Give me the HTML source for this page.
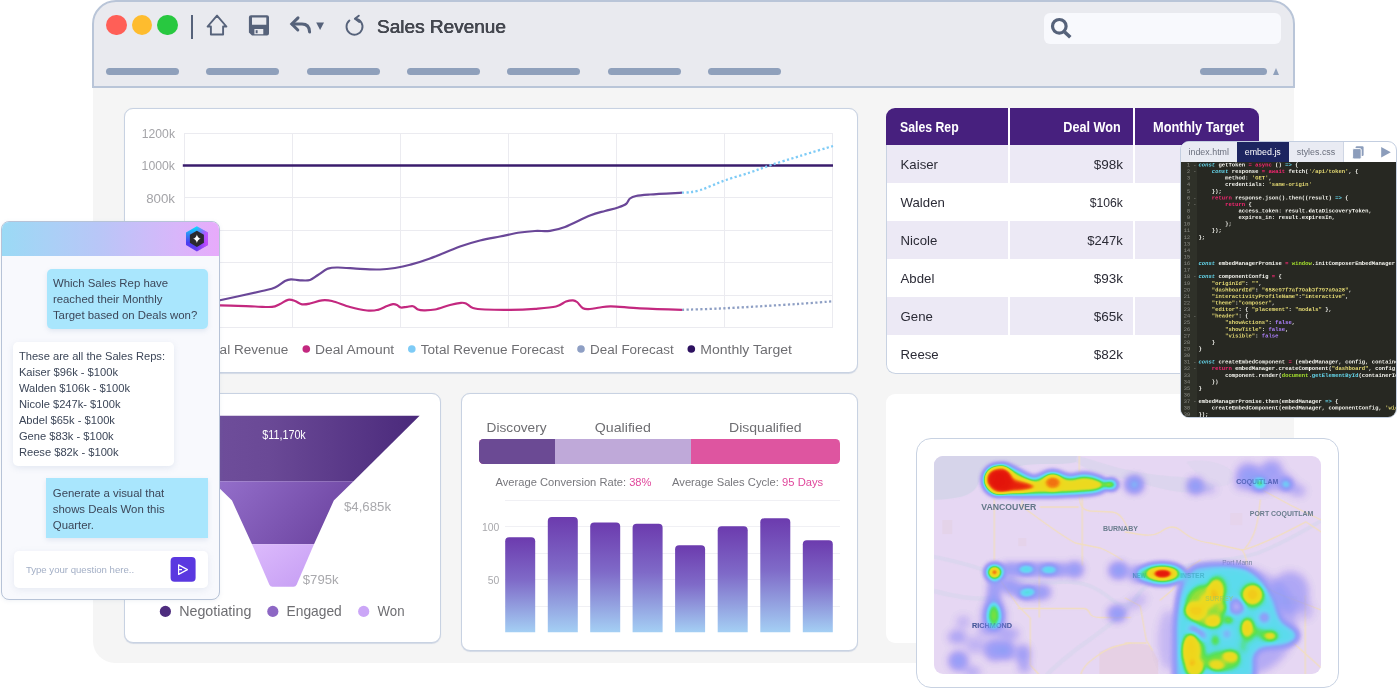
<!DOCTYPE html>
<html lang="en">
<head>
<meta charset="utf-8">
<title>Sales Revenue</title>
<style>
*{box-sizing:border-box;margin:0;padding:0}
html,body{width:1398px;height:688px;overflow:hidden;background:#fff;font-family:"Liberation Sans",sans-serif}
#stage{position:relative;width:1398px;height:688px;overflow:hidden;will-change:transform}
.abs{position:absolute}
/* window */
#content{left:93px;top:87px;width:1201px;height:576px;background:#f5f5f5;border-radius:0 0 0 22px}
#header{left:92px;top:0;width:1203px;height:88px;background:#e9eaef;border:2px solid #b9c5d8;border-radius:24px 24px 0 0}
.dot{width:20.4px;height:20.4px;border-radius:50%;top:15px}
.pill{height:7px;border-radius:4px;background:#8fa0bb;top:68px;width:73px}
#title{left:377px;top:15px;font-size:19px;line-height:24px;color:#44474f;font-weight:400;text-shadow:.35px 0 0 #44474f,-.2px 0 0 #44474f;white-space:nowrap}
#search{left:1044px;top:13px;width:236.5px;height:30.5px;background:#f8f9fd;border-radius:6px}
.card{background:#fff;border:1.3px solid #c8d2e2;border-radius:9px;box-shadow:0 .8px .8px rgba(170,185,210,.45)}
.t{position:absolute;white-space:nowrap;line-height:1}
</style>
</head>
<body>
<div id="stage">
<div id="content" class="abs"></div>
<div id="header" class="abs"></div>
<div class="abs dot" style="left:106.4px;background:#ff5f57"></div>
<div class="abs dot" style="left:131.8px;background:#febc2e"></div>
<div class="abs dot" style="left:157.4px;background:#28c840"></div>
<div class="abs" style="left:191px;top:15px;width:2px;height:24px;background:#56627a"></div>
<div id="search" class="abs"></div>
<svg class="abs" style="left:0;top:0" width="1398" height="60" viewBox="0 0 1398 60">
<g fill="none" stroke="#56627a" stroke-width="1.9" stroke-linejoin="round" stroke-linecap="round">
<path d="M217 15.6 L207.6 26.5 L210.9 26.5 L210.9 34.5 L223.1 34.5 L223.1 26.5 L226.4 26.5 Z"/>
<path d="M349.4 20.5 A8 8 0 1 0 355.4 18.7"/>
<path d="M358.8 15.7 L354.9 18.8 L359.3 22"/>
</g>
<path d="M251 15.3 H267 Q269 15.3 269 17.3 V33.4 Q269 35.4 267 35.4 H252 L248.9 32.6 V17.3 Q248.9 15.3 251 15.3 Z M252 17.6 V24.8 H266.3 V17.6 Z M254.4 29 V34.2 H263.3 V29 Z" fill="#56627a" fill-rule="evenodd"/>
<rect x="255.7" y="30.2" width="1.9" height="3" fill="#56627a"/>
<path d="M298 17.9 L291.8 24 L297.8 30" fill="none" stroke="#56627a" stroke-width="3" stroke-linejoin="miter" stroke-linecap="round"/>
<path d="M292.3 24 H302 Q309.3 24 309.6 32" fill="none" stroke="#56627a" stroke-width="3" stroke-linecap="round"/>
<path d="M316.2 22.5 H324 L320.1 30 Z" fill="#56627a"/>
<circle cx="1059.3" cy="26.3" r="6.8" fill="none" stroke="#56627a" stroke-width="3.2"/>
<path d="M1064.6 32 L1070.3 37.3" stroke="#56627a" stroke-width="3.6" fill="none"/>
</svg>
<div id="title" class="abs">Sales Revenue</div>
<div class="abs pill" style="left:106px"></div>
<div class="abs pill" style="left:206.3px"></div>
<div class="abs pill" style="left:306.6px"></div>
<div class="abs pill" style="left:406.9px"></div>
<div class="abs pill" style="left:507.2px"></div>
<div class="abs pill" style="left:607.5px"></div>
<div class="abs pill" style="left:707.8px"></div>
<div class="abs pill" style="left:1200px;width:67px"></div>
<div class="abs" style="left:1272.5px;top:68px;width:0;height:0;border-left:3.6px solid transparent;border-right:3.6px solid transparent;border-bottom:7px solid #8fa0bb"></div>

<div class="abs card" style="left:124px;top:107.5px;width:733.5px;height:265.5px"></div>
<svg class="abs" style="left:0;top:0" width="1398" height="688" viewBox="0 0 1398 688" font-family="Liberation Sans, sans-serif">
<g stroke="#ebebf0" stroke-width="1" fill="none"><path d="M184 133.5 H833"/><path d="M184 165.5 H833"/><path d="M184 197.5 H833"/><path d="M184 230.5 H833"/><path d="M184 262.5 H833"/><path d="M184 295.5 H833"/><path d="M184 327.5 H833"/><path d="M184.5 133 V327.5"/><path d="M292.5 133 V327.5"/><path d="M400.5 133 V327.5"/><path d="M508.5 133 V327.5"/><path d="M616.5 133 V327.5"/><path d="M724.5 133 V327.5"/><path d="M832.5 133 V327.5"/></g>
<g font-size="13.3" fill="#a4a4a8"><text x="175" y="137.9" text-anchor="end" textLength="33.2" lengthAdjust="spacingAndGlyphs">1200k</text><text x="175" y="170.3" text-anchor="end" textLength="33.4" lengthAdjust="spacingAndGlyphs">1000k</text><text x="175" y="202.7" text-anchor="end">800k</text></g>
<path d="M182.8 165.5 H833" stroke="#3a1c6c" stroke-width="2.6" fill="none"/>
<path d="M150 318 C155.7 316.4 172.3 311.4 184 308.5 C195.7 305.6 207.0 303.2 220 300.3 C233.0 297.4 252.8 293.1 262 291 C271.2 288.9 271.2 289.2 275 287.5 C278.8 285.8 282.3 282.4 285 281 C287.7 279.6 288.5 279.4 291 279.3 C293.5 279.2 296.8 280.2 300 280.3 C303.2 280.4 307.0 280.9 310 280 C313.0 279.1 315.0 276.9 318 275 C321.0 273.1 324.7 269.9 328 268.6 C331.3 267.4 332.7 267.5 338 267.5 C343.3 267.5 353.0 268.5 360 268.8 C367.0 269.1 374.2 269.6 380 269.5 C385.8 269.4 390.0 268.8 395 268 C400.0 267.2 404.2 266.4 410 264.8 C415.8 263.2 421.7 261.6 430 258.5 C438.3 255.4 451.7 249.5 460 246.5 C468.3 243.5 473.3 242.2 480 240.5 C486.7 238.8 493.3 237.8 500 236.5 C506.7 235.2 514.2 233.4 520 232.5 C525.8 231.6 530.0 231.3 535 231 C540.0 230.7 545.0 231.5 550 230.8 C555.0 230.1 558.3 229.6 565 227 C571.7 224.4 583.3 218.2 590 215.5 C596.7 212.8 600.3 212.3 605 211 C609.7 209.7 614.5 208.7 618 207.5 C621.5 206.3 624.0 205.5 626 204 C628.0 202.5 628.3 199.8 630 198.5 C631.7 197.2 632.7 196.7 636 196 C639.3 195.3 642.3 195.1 650 194.5 C657.7 193.9 676.7 193.0 682 192.7" stroke="#6a4798" stroke-width="2.2" fill="none"/>
<path d="M150 305 C155.7 305.0 172.3 305.1 184 305.2 C195.7 305.2 208.2 305.1 220 305.3 C231.8 305.5 246.3 306.2 255 306.5 C263.7 306.8 267.8 307.3 272 306.9 C276.2 306.5 277.3 305.2 280 304 C282.7 302.8 285.5 300.3 288 299.8 C290.5 299.3 292.7 300.2 295 301 C297.3 301.8 299.5 303.9 302 304.3 C304.5 304.7 306.7 304.2 310 303.5 C313.3 302.8 318.3 300.7 322 300.3 C325.7 299.9 327.3 299.9 332 301 C336.7 302.1 344.2 305.4 350 307 C355.8 308.6 362.3 310.0 367 310.5 C371.7 311.0 374.7 310.6 378 309.8 C381.3 309.1 384.5 306.9 387 306 C389.5 305.1 391.3 304.4 393 304.2 C394.7 304.0 395.7 304.4 397 305 C398.3 305.6 399.3 307.2 401 307.5 C402.7 307.8 405.0 307.0 407 306.8 C409.0 306.6 411.2 305.8 413 306.2 C414.8 306.6 416.2 308.8 418 309.5 C419.8 310.2 421.2 310.3 424 310.3 C426.8 310.3 430.7 310.4 435 309.5 C439.3 308.6 445.7 306.1 450 305 C454.3 303.9 458.3 303.1 461 302.8 C463.7 302.6 464.0 302.6 466 303.5 C468.0 304.4 469.8 307.0 473 308 C476.2 309.0 478.8 309.2 485 309.5 C491.2 309.8 501.7 310.0 510 309.9 C518.3 309.8 527.3 309.4 535 308.8 C542.7 308.2 550.8 307.7 556 306.5 C561.2 305.3 563.2 302.5 566 301.5 C568.8 300.5 571.2 300.2 573 300.3 C574.8 300.4 575.3 300.7 577 302 C578.7 303.3 580.8 307.1 583 308.3 C585.2 309.5 587.2 309.1 590 309 C592.8 308.9 596.5 307.9 600 307.5 C603.5 307.1 604.3 306.2 611 306.3 C617.7 306.4 628.2 307.7 640 308.3 C651.8 308.9 675.0 309.6 682 309.8" stroke="#c3287f" stroke-width="2.2" fill="none"/>
<path d="M682 192.7 C683.3 192.6 687.0 192.6 690 192.2 C693.0 191.8 696.3 191.3 700 190.2 C703.7 189.1 707.7 187.2 712 185.5 C716.3 183.8 719.7 182.2 726 180 C732.3 177.8 742.5 175.0 750 172.5 C757.5 170.0 762.7 167.8 771 165 C779.3 162.2 789.7 159.2 800 156 C810.3 152.8 827.5 147.7 833 146" stroke="#7ecbf6" stroke-width="2.3" fill="none" stroke-dasharray="2.2 2.4"/>
<path d="M682 309.8 C688.3 309.6 707.0 309.1 720 308.5 C733.0 307.9 746.7 307.1 760 306.3 C773.3 305.5 787.8 304.6 800 303.8 C812.2 303.0 827.5 301.7 833 301.3" stroke="#8e9fc4" stroke-width="2.3" fill="none" stroke-dasharray="2.2 2.4"/>
<g font-size="13.7" fill="#6e6e72">
<circle cx="306.3" cy="349" r="3.8" fill="#c3287f"/><text x="315" y="353.7" textLength="79.2" lengthAdjust="spacingAndGlyphs">Deal Amount</text>
<circle cx="411.8" cy="349" r="3.8" fill="#7ecbf6"/><text x="420.8" y="353.7" textLength="143.2" lengthAdjust="spacingAndGlyphs">Total Revenue Forecast</text>
<circle cx="581" cy="349" r="3.8" fill="#8e9fc4"/><text x="590" y="353.7" textLength="83.7" lengthAdjust="spacingAndGlyphs">Deal Forecast</text>
<circle cx="691.3" cy="349" r="3.8" fill="#2d1160"/><text x="700.2" y="353.7" textLength="91.8" lengthAdjust="spacingAndGlyphs">Monthly Target</text>
<circle cx="192.5" cy="349" r="3.8" fill="#6a4798"/><text x="201.5" y="353.7" textLength="86.8" lengthAdjust="spacingAndGlyphs">Total Revenue</text>
</g>
</svg>
<div class="abs card" style="left:124px;top:393px;width:317px;height:249.5px"></div>
<svg class="abs" style="left:0;top:0" width="1398" height="688" viewBox="0 0 1398 688" font-family="Liberation Sans, sans-serif">
<defs>
<linearGradient id="f1" x1="0" y1="0" x2="1" y2="0"><stop offset="0" stop-color="#7453a0"/><stop offset=".45" stop-color="#6a4996"/><stop offset="1" stop-color="#4a297b"/></linearGradient>
<linearGradient id="f2" x1="0" y1="0" x2="1" y2="0.4"><stop offset="0" stop-color="#9570cc"/><stop offset="1" stop-color="#6f47a3"/></linearGradient>
<linearGradient id="f3" x1="0" y1="0" x2="1" y2="1"><stop offset="0" stop-color="#dcbafc"/><stop offset="1" stop-color="#c59df3"/></linearGradient>
</defs>
<path d="M146.2 415.8 H419.6 L353.5 481.2 H212.3 Z" fill="url(#f1)"/>
<path d="M212.3 481.2 H353.5 L333.8 500.6 L314 544.3 H252 L232 500.6 Z" fill="url(#f2)"/>
<path d="M252 544.3 H314 L296.6 584.8 Q295.7 586.8 293.5 586.8 H272.5 Q270.3 586.8 269.4 584.8 Z" fill="url(#f3)"/>
<text x="284" y="438.8" font-size="12.6" fill="#fff" text-anchor="middle" textLength="43.5" lengthAdjust="spacingAndGlyphs">$11,170k</text>
<g font-size="13.2" fill="#a9a9ad">
<text x="344" y="510.8" textLength="47" lengthAdjust="spacingAndGlyphs">$4,685k</text>
<text x="302.8" y="583.8" textLength="35.8" lengthAdjust="spacingAndGlyphs">$795k</text>
</g>
<g font-size="14.2" fill="#6e6e72">
<circle cx="165.4" cy="611.4" r="5.6" fill="#4d2c7e"/><text x="179.2" y="616.3" textLength="72.2" lengthAdjust="spacingAndGlyphs">Negotiating</text>
<circle cx="272.8" cy="611.4" r="5.6" fill="#8d67c4"/><text x="286.6" y="616.3" textLength="55.2" lengthAdjust="spacingAndGlyphs">Engaged</text>
<circle cx="363.7" cy="611.4" r="5.6" fill="#cba6f7"/><text x="377.5" y="616.3" textLength="27" lengthAdjust="spacingAndGlyphs">Won</text>
</g>
</svg>
<div class="abs card" style="left:461px;top:393px;width:397px;height:258px"></div>
<div class="abs" style="left:478.7px;top:438.6px;width:361.5px;height:25px;border-radius:4.5px;overflow:hidden;background:#de55a0"><div class="abs" style="left:0;top:0;width:76.8px;height:25px;background:#6b4a94"></div><div class="abs" style="left:76.8px;top:0;width:135.8px;height:25px;background:#bfa9d9"></div></div>
<svg class="abs" style="left:0;top:0" width="1398" height="688" viewBox="0 0 1398 688" font-family="Liberation Sans, sans-serif">
<defs><linearGradient id="bg0" gradientUnits="userSpaceOnUse" x1="0" y1="537.3" x2="0" y2="632.2"><stop offset="0" stop-color="#6c3bae"/><stop offset=".45" stop-color="#7f6ac8"/><stop offset="1" stop-color="#a4cff4"/></linearGradient><linearGradient id="bg1" gradientUnits="userSpaceOnUse" x1="0" y1="517" x2="0" y2="632.2"><stop offset="0" stop-color="#6c3bae"/><stop offset=".45" stop-color="#7f6ac8"/><stop offset="1" stop-color="#a4cff4"/></linearGradient><linearGradient id="bg2" gradientUnits="userSpaceOnUse" x1="0" y1="522.5" x2="0" y2="632.2"><stop offset="0" stop-color="#6c3bae"/><stop offset=".45" stop-color="#7f6ac8"/><stop offset="1" stop-color="#a4cff4"/></linearGradient><linearGradient id="bg3" gradientUnits="userSpaceOnUse" x1="0" y1="523.8" x2="0" y2="632.2"><stop offset="0" stop-color="#6c3bae"/><stop offset=".45" stop-color="#7f6ac8"/><stop offset="1" stop-color="#a4cff4"/></linearGradient><linearGradient id="bg4" gradientUnits="userSpaceOnUse" x1="0" y1="545.3" x2="0" y2="632.2"><stop offset="0" stop-color="#6c3bae"/><stop offset=".45" stop-color="#7f6ac8"/><stop offset="1" stop-color="#a4cff4"/></linearGradient><linearGradient id="bg5" gradientUnits="userSpaceOnUse" x1="0" y1="526.3" x2="0" y2="632.2"><stop offset="0" stop-color="#6c3bae"/><stop offset=".45" stop-color="#7f6ac8"/><stop offset="1" stop-color="#a4cff4"/></linearGradient><linearGradient id="bg6" gradientUnits="userSpaceOnUse" x1="0" y1="518.3" x2="0" y2="632.2"><stop offset="0" stop-color="#6c3bae"/><stop offset=".45" stop-color="#7f6ac8"/><stop offset="1" stop-color="#a4cff4"/></linearGradient><linearGradient id="bg7" gradientUnits="userSpaceOnUse" x1="0" y1="540.2" x2="0" y2="632.2"><stop offset="0" stop-color="#6c3bae"/><stop offset=".45" stop-color="#7f6ac8"/><stop offset="1" stop-color="#a4cff4"/></linearGradient></defs>
<g font-size="13.6" fill="#6e6e72" text-anchor="middle">
<text x="516.6" y="431.9" textLength="60" lengthAdjust="spacingAndGlyphs">Discovery</text>
<text x="622.8" y="431.9" textLength="56" lengthAdjust="spacingAndGlyphs">Qualified</text>
<text x="765.3" y="431.9" textLength="72.5" lengthAdjust="spacingAndGlyphs">Disqualified</text>
</g>
<g font-size="11.1" fill="#77777c">
<text x="495.5" y="485.9" textLength="156" lengthAdjust="spacingAndGlyphs">Average Conversion Rate: <tspan fill="#e0489c">38%</tspan></text>
<text x="672" y="485.9" textLength="151.2" lengthAdjust="spacingAndGlyphs">Average Sales Cycle: <tspan fill="#e0489c">95 Days</tspan></text>
</g>
<g stroke="#f0f0f4" stroke-width="1" fill="none"><path d="M505 500.5 H840"/><path d="M505 526.5 H840"/><path d="M505 553.5 H840"/><path d="M505 579.5 H840"/><path d="M505 606.5 H840"/></g>
<g font-size="10.4" fill="#a9a9ad" text-anchor="end"><text x="499.3" y="530.6">100</text><text x="499.3" y="584.2">50</text></g>
<path d="M505.2 632.2 V541.3 Q505.2 537.3 509.2 537.3 H531.2 Q535.2 537.3 535.2 541.3 V632.2 Z" fill="url(#bg0)"/><path d="M547.8 632.2 V521 Q547.8 517 551.8 517 H573.8 Q577.8 517 577.8 521 V632.2 Z" fill="url(#bg1)"/><path d="M590.2 632.2 V526.5 Q590.2 522.5 594.2 522.5 H616.2 Q620.2 522.5 620.2 526.5 V632.2 Z" fill="url(#bg2)"/><path d="M632.6 632.2 V527.8 Q632.6 523.8 636.6 523.8 H658.6 Q662.6 523.8 662.6 527.8 V632.2 Z" fill="url(#bg3)"/><path d="M675.1 632.2 V549.3 Q675.1 545.3 679.1 545.3 H701.1 Q705.1 545.3 705.1 549.3 V632.2 Z" fill="url(#bg4)"/><path d="M717.7 632.2 V530.3 Q717.7 526.3 721.7 526.3 H743.7 Q747.7 526.3 747.7 530.3 V632.2 Z" fill="url(#bg5)"/><path d="M760.3 632.2 V522.3 Q760.3 518.3 764.3 518.3 H786.3 Q790.3 518.3 790.3 522.3 V632.2 Z" fill="url(#bg6)"/><path d="M802.8 632.2 V544.2 Q802.8 540.2 806.8 540.2 H828.8 Q832.8 540.2 832.8 544.2 V632.2 Z" fill="url(#bg7)"/>
</svg>
<div class="abs" style="left:886.2px;top:108.1px;width:372.6px;height:265px;border-radius:9px;overflow:hidden;background:#fff">
<div class="abs" style="left:0;top:0;width:373px;height:37.1px;background:#47207e"></div>
<div class="abs" style="left:0;top:37.10px;width:373px;height:38px;background:#ece9f5"></div><div class="t" style="left:14.4px;top:50.30px;font-size:13.2px;color:#2b2b36">Kaiser</div><div class="t" style="right:135.7px;top:50.30px;font-size:13.5px;color:#2b2b36;transform:scaleX(1);transform-origin:right">$98k</div><div class="abs" style="left:0;top:75.05px;width:373px;height:38px;background:#fff"></div><div class="t" style="left:14.4px;top:88.25px;font-size:13.2px;color:#2b2b36">Walden</div><div class="t" style="right:135.7px;top:88.25px;font-size:13.5px;color:#2b2b36;transform:scaleX(0.9);transform-origin:right">$106k</div><div class="abs" style="left:0;top:113.00px;width:373px;height:38px;background:#ece9f5"></div><div class="t" style="left:14.4px;top:126.20px;font-size:13.2px;color:#2b2b36">Nicole</div><div class="t" style="right:135.7px;top:126.20px;font-size:13.5px;color:#2b2b36;transform:scaleX(0.965);transform-origin:right">$247k</div><div class="abs" style="left:0;top:150.95px;width:373px;height:38px;background:#fff"></div><div class="t" style="left:14.4px;top:164.15px;font-size:13.2px;color:#2b2b36">Abdel</div><div class="t" style="right:135.7px;top:164.15px;font-size:13.5px;color:#2b2b36;transform:scaleX(1);transform-origin:right">$93k</div><div class="abs" style="left:0;top:188.90px;width:373px;height:38px;background:#ece9f5"></div><div class="t" style="left:14.4px;top:202.10px;font-size:13.2px;color:#2b2b36">Gene</div><div class="t" style="right:135.7px;top:202.10px;font-size:13.5px;color:#2b2b36;transform:scaleX(1);transform-origin:right">$65k</div><div class="abs" style="left:0;top:226.85px;width:373px;height:38px;background:#fff"></div><div class="t" style="left:14.4px;top:240.05px;font-size:13.2px;color:#2b2b36">Reese</div><div class="t" style="right:135.7px;top:240.05px;font-size:13.5px;color:#2b2b36;transform:scaleX(1);transform-origin:right">$82k</div>
<div class="abs" style="left:122px;top:0;width:2px;height:266px;background:#fff"></div>
<div class="abs" style="left:246.8px;top:0;width:2px;height:266px;background:#fff"></div>
<div class="t" style="left:13.4px;top:13px;font-size:13.8px;font-weight:700;color:#fff;transform:scaleX(.89);transform-origin:left">Sales Rep</div>
<div class="t" style="right:138.3px;top:13px;font-size:13.8px;font-weight:700;color:#fff;transform:scaleX(.915);transform-origin:right">Deal Won</div>
<div class="t" style="left:267.2px;top:13px;font-size:13.8px;font-weight:700;color:#fff;transform:scaleX(.93);transform-origin:left">Monthly Target</div>
</div>
<div class="abs" style="left:885.7px;top:145px;width:373.6px;height:228.6px;border:1.2px solid #c8d2e2;border-top:none;border-radius:0 0 9.5px 9.5px"></div>
<div class="abs" style="left:886px;top:393.5px;width:374px;height:249px;background:#fff;border-radius:9px"></div>
<!--MAPSTART--><div class="abs" style="left:915.8px;top:438px;width:422.8px;height:249.5px;background:#fff;border:1.3px solid #c8d2e2;border-radius:15px"></div>
<svg class="abs" style="left:933.7px;top:456px;border-radius:9px" width="387.3" height="217.8" viewBox="933.7 456 387.3 217.8" font-family="Liberation Sans, sans-serif">
<defs>
<filter id="heat" filterUnits="userSpaceOnUse" x="920" y="440" width="420" height="250" color-interpolation-filters="sRGB">
<feColorMatrix in="SourceGraphic" type="matrix" values="0 0 0 1 0 0 0 0 1 0 0 0 0 1 0 0 0 0 0 1" result="gray"/>
<feComponentTransfer in="gray" result="col">
<feFuncR type="table" tableValues="0.66 0.62 0.58 0.55 0.53 0.51 0.49 0.46 0.42 0.38 0.36 0.34 0.33 0.34 0.45 0.68 0.86 0.92 0.93 0.94 0.95 0.95 0.95 0.93 0.91 0.89"/>
<feFuncG type="table" tableValues="0.58 0.56 0.55 0.55 0.56 0.58 0.62 0.70 0.78 0.84 0.86 0.87 0.88 0.88 0.88 0.87 0.86 0.86 0.85 0.84 0.78 0.64 0.46 0.28 0.13 0.07"/>
<feFuncB type="table" tableValues="0.94 0.95 0.96 0.97 0.97 0.97 0.97 0.97 0.96 0.95 0.93 0.80 0.55 0.35 0.26 0.20 0.15 0.13 0.12 0.11 0.10 0.08 0.07 0.06 0.05 0.04"/>
</feComponentTransfer>
<feComponentTransfer in="SourceGraphic" result="mask">
<feFuncA type="table" tableValues="0.00 0.32 0.56 0.70 0.78 0.84 0.88 0.92 0.95 0.97 1.00 1.00 1.00 1.00 1.00 1.00 1.00 1.00 1.00 1.00 1.00 1.00 1.00 1.00 1.00 1.00"/>
</feComponentTransfer>
<feComposite in="col" in2="mask" operator="in"/>
</filter>
<filter id="bhs" filterUnits="userSpaceOnUse" x="900" y="420" width="460" height="290"><feGaussianBlur stdDeviation="2.6"/></filter>
<filter id="bhw" filterUnits="userSpaceOnUse" x="900" y="420" width="460" height="290"><feGaussianBlur stdDeviation="4.2"/></filter>
<filter id="bsp" filterUnits="userSpaceOnUse" x="900" y="420" width="460" height="290"><feGaussianBlur stdDeviation="3"/></filter>
<filter id="brv" filterUnits="userSpaceOnUse" x="900" y="420" width="460" height="290"><feGaussianBlur stdDeviation="2.3"/></filter>
<filter id="bm" filterUnits="userSpaceOnUse" x="900" y="420" width="460" height="290"><feGaussianBlur stdDeviation="2"/></filter>
<filter id="bms" filterUnits="userSpaceOnUse" x="900" y="420" width="460" height="290"><feGaussianBlur stdDeviation="2.8"/></filter>
<filter id="br" filterUnits="userSpaceOnUse" x="900" y="420" width="460" height="290"><feGaussianBlur stdDeviation="1.5"/></filter>
<filter id="soft" filterUnits="userSpaceOnUse" x="900" y="420" width="460" height="290"><feGaussianBlur stdDeviation=".7"/></filter>
</defs>
<rect x="930" y="450" width="400" height="230" fill="#e6d7f3"/>
<g filter="url(#soft)">
<path d="M930 450 H1078 L1076 462 C1060 466 1040 462 1020 466 C1000 470 985 468 980 478 C978 488 972 494 960 497 C950 499 940 500 930 500 Z" fill="#d6d4ea"/>
<path d="M1078 456 C1100 462 1120 470 1150 474 C1180 478 1200 476 1212 484 C1220 490 1200 494 1180 492 C1160 490 1140 482 1120 478 C1100 474 1085 470 1076 462 Z" fill="#dad5ec" opacity=".8"/>
<path d="M1186 462 C1200 458 1225 462 1232 472 C1236 482 1226 488 1214 486 C1204 480 1194 472 1186 462 Z" fill="#ddd6ee" opacity=".7"/>
<path d="M930 556 C950 560 975 566 994 574 C1010 580 1040 584 1060 582 C1085 580 1100 590 1112 600 C1124 610 1132 604 1140 592 C1150 580 1165 572 1185 566 C1210 560 1240 560 1260 552 C1285 542 1305 530 1322 520" fill="none" stroke="#d9d6ee" stroke-width="4" opacity=".8"/>
<path d="M930 590 C950 596 975 600 990 598 M1140 592 C1125 615 1100 632 1075 650 C1060 662 1050 670 1046 676" fill="none" stroke="#d9d6ee" stroke-width="4.5" opacity=".75"/>
<path d="M1099 676 L1099 652 L1112 646 L1130 643 L1150 645 L1158 660 L1158 676 Z" fill="#e6d0e4"/>
<rect x="942" y="520" width="10" height="14" fill="#e4d2e6" opacity=".8"/><rect x="1018" y="538" width="8" height="8" fill="#e4d2e6" opacity=".7"/>
<rect x="1283" y="596" width="14" height="8" fill="#dfd6e6" opacity=".8"/><rect x="1230" y="513" width="12" height="12" fill="#e6d3e8" opacity=".7"/>
<g fill="none" stroke="#f1ddc0" stroke-width="1.3" stroke-linecap="round" stroke-linejoin="round">
<path d="M994 497 V560"/><path d="M1022 497 V505"/><path d="M1079 456 V497 C1080 506 1082 510 1090 511 L1112 512 C1120 513 1124 520 1128 530"/>
<path d="M1040 507 H1078"/><path d="M1020 505 C1040 520 1060 535 1075 543 L1100 548 C1110 552 1116 556 1122 560"/>
<path d="M1082 497 V565"/>
<path d="M1125 532 C1140 534 1150 538 1160 532 C1168 526 1174 525 1180 530 C1190 538 1196 541 1210 543 L1242 550 C1262 545 1290 530 1305.500 521.8 L1321 532"/>
<path d="M1242 550 C1246 556 1247 562 1246 568"/><path d="M1260 500 C1258 520 1256 535 1245 548"/><path d="M1262 490 L1290 505 L1321 520"/>
<path d="M1000 580 L1018 606 L1030 618 V665 L1040 676"/><path d="M1018 608.500 H1084 C1088 609 1089 612 1090 614 C1092 617 1096 617.500 1100 617.500 H1130"/>
<path d="M1039 568 V617"/><path d="M1080 676 C1082 668 1088 662 1094 658 C1104 650 1112 646 1130 643"/>
<path d="M1125 598 L1140 606 L1146 640 L1152 650"/><path d="M1125 643 H1146"/><path d="M1160 600 L1172 590 L1185 570 L1200 560"/>
<path d="M1248 566 C1256 580 1266 590 1284 596 L1321 610"/><path d="M1305 596 V676"/><path d="M1290 640 L1321 668"/>
</g>
</g><g><text x="981" y="510.3" font-size="8.3" font-weight="700" fill="#5c7282" fill-opacity="0.95" textLength="55" lengthAdjust="spacingAndGlyphs">VANCOUVER</text><text x="1102.6" y="530.6" font-size="6.6" font-weight="700" fill="#5c7282" fill-opacity="0.9" textLength="35" lengthAdjust="spacingAndGlyphs">BURNABY</text><text x="1236" y="484.2" font-size="6.6" font-weight="700" fill="#3a4f86" fill-opacity="1" textLength="42" lengthAdjust="spacingAndGlyphs">COQUITLAM</text><text x="1249.5" y="516.4" font-size="6.6" font-weight="700" fill="#5c7282" fill-opacity="0.9" textLength="63.5" lengthAdjust="spacingAndGlyphs">PORT COQUITLAM</text><text x="1222" y="564.6" font-size="6.4" font-weight="400" fill="#5c7282" fill-opacity="0.9" textLength="30" lengthAdjust="spacingAndGlyphs">Port Mann</text><text x="971.8" y="628.2" font-size="6.8" font-weight="700" fill="#3f548a" fill-opacity="1" textLength="40" lengthAdjust="spacingAndGlyphs">RICHMOND</text><text x="1132.3" y="577.6" font-size="6.8" font-weight="700" fill="#4c6488" fill-opacity="0.95" textLength="72" lengthAdjust="spacingAndGlyphs">NEW WESTMINSTER</text></g>
</svg>
<svg class="abs" style="left:933.7px;top:456px;border-radius:9px" width="387.3" height="217.8" viewBox="933.7 456 387.3 217.8" font-family="Liberation Sans, sans-serif">
<g filter="url(#heat)" fill="#fff">
<g filter="url(#bhw)"><ellipse cx="1134" cy="484.5" rx="7.5" ry="7" fill-opacity="0.34"/><ellipse cx="1195" cy="486" rx="7" ry="7" fill-opacity="0.24"/><ellipse cx="1208" cy="489" rx="8" ry="3" fill-opacity="0.1"/><ellipse cx="1262" cy="479" rx="26" ry="12" fill-opacity="0.1"/><ellipse cx="1247" cy="472" rx="10" ry="9" fill-opacity="0.1"/><ellipse cx="1298" cy="491" rx="7" ry="5" fill-opacity="0.1"/><ellipse cx="1272" cy="467" rx="9" ry="7" fill-opacity="0.1"/><ellipse cx="1286" cy="484.5" rx="9" ry="7" fill-opacity="0.12"/><ellipse cx="1259" cy="483" rx="11" ry="8" fill-opacity="0.1"/><ellipse cx="1240" cy="484" rx="6" ry="6" fill-opacity="0.06"/><path d="M1005 569.5 L1062 570" fill="none" stroke="#fff" stroke-width="9" stroke-opacity="0.22" stroke-linecap="round" stroke-linejoin="round"/><ellipse cx="1074.5" cy="569.6" rx="7.5" ry="6.5" fill-opacity="0.22"/><ellipse cx="1118.3" cy="570.5" rx="8.5" ry="7" fill-opacity="0.24"/><ellipse cx="1138" cy="574" rx="8" ry="7" fill-opacity="0.2"/><path d="M1006 585 L1026 593 L1044 592" fill="none" stroke="#fff" stroke-width="11" stroke-opacity="0.2" stroke-linecap="round" stroke-linejoin="round"/><path d="M994.5 580 L993 603" fill="none" stroke="#fff" stroke-width="8" stroke-opacity="0.22" stroke-linecap="round" stroke-linejoin="round"/><ellipse cx="993.6" cy="616" rx="11" ry="17" fill-opacity="0.16"/><ellipse cx="1116.8" cy="613.5" rx="8" ry="7" fill-opacity="0.22"/><ellipse cx="963" cy="622" rx="7" ry="6" fill-opacity="0.07"/><ellipse cx="957" cy="637" rx="9" ry="6" fill-opacity="0.12"/><ellipse cx="958" cy="661" rx="8.5" ry="8.5" fill-opacity="0.2"/><ellipse cx="975" cy="645" rx="10" ry="8" fill-opacity="0.07"/><ellipse cx="994.5" cy="650" rx="9.5" ry="9.5" fill-opacity="0.18"/><ellipse cx="1007" cy="650.5" rx="6" ry="8.5" fill-opacity="0.2"/><ellipse cx="1022.5" cy="654" rx="6.5" ry="8.5" fill-opacity="0.16"/><ellipse cx="1024" cy="667" rx="5" ry="6" fill-opacity="0.12"/><ellipse cx="972" cy="672" rx="8" ry="5" fill-opacity="0.1"/><ellipse cx="1008" cy="634" rx="11" ry="6" fill-opacity="0.1"/><ellipse cx="985" cy="630" rx="8" ry="6" fill-opacity="0.08"/><ellipse cx="1136" cy="602" rx="12" ry="6" fill-opacity="0.06" transform="rotate(-30 1136 602)"/><ellipse cx="1236" cy="622" rx="60" ry="55" fill-opacity="0.09"/><ellipse cx="1290" cy="592" rx="18" ry="20" fill-opacity="0.1"/><ellipse cx="1168" cy="640" rx="10" ry="30" fill-opacity="0.06"/><ellipse cx="1305" cy="610" rx="8" ry="10" fill-opacity="0.06"/></g>
<g filter="url(#bsp)"><path d="M1197 566 C1212 563 1236 564 1247 569 C1258 575 1266 585 1271 597 C1276 607 1277 616 1282 622 C1288 628 1298 629 1298 636 C1297 644 1284 646 1268 647 C1258 648 1254 652 1253 660 L1254 680 L1174 680 C1175 650 1175 625 1177 603 C1179 590 1181 580 1186 574 C1189 570 1193 567 1197 566 Z M1236 599 a7.5 7.5 0 1 0 0.1 0 Z M1264 613 a4.5 4.5 0 1 0 0.1 0 Z M1192 625 l14 10 l-4.5 6 l-14 -10 Z M1226.5 630.5 a3 3.5 0 1 0 0.1 0 Z" fill-rule="evenodd" fill-opacity="0.34"/></g>
<g filter="url(#bhs)"><ellipse cx="997.5" cy="480" rx="15.5" ry="16" fill-opacity="0.42"/><g opacity=".42"><path d="M1003 468 C1012 470 1022 478.5 1032 481 C1040 482.5 1044 475.2 1052 475 C1060 475 1062 479.5 1069 479.8 C1075 480 1078 477.6 1085 477.8 C1092 478 1095 480 1099 481.2 C1103 482.5 1104 486 1099 488.3 C1094 490 1090 490.4 1085 490.6 C1075 491.3 1065 492 1052 492.2 C1040 492.3 1025 492.6 1012 492.2 C1006 492 1000 491 996 489 Z" stroke="#fff" stroke-width="8.5" stroke-linejoin="round"/></g><ellipse cx="1111" cy="484.6" rx="6.5" ry="5.5" fill-opacity="0.42"/><ellipse cx="994.2" cy="572.2" rx="9.5" ry="9" fill-opacity="0.42"/><ellipse cx="1161.5" cy="574" rx="24" ry="11" fill-opacity="0.42"/><ellipse cx="993.6" cy="616" rx="7.5" ry="12.5" fill-opacity="0.4"/><ellipse cx="1259.5" cy="483.5" rx="6.5" ry="6" fill-opacity="0.3"/><ellipse cx="1286" cy="484.5" rx="5" ry="4.5" fill-opacity="0.26"/><ellipse cx="1026" cy="569.3" rx="7.5" ry="4.2" fill-opacity="0.33"/><ellipse cx="1048.5" cy="569.8" rx="8" ry="4.2" fill-opacity="0.31"/><ellipse cx="1027" cy="592.5" rx="8" ry="4.5" fill-opacity="0.33" transform="rotate(-12 1027 592.5)"/></g>
<g filter="url(#bms)"><ellipse cx="1215.8" cy="590" rx="7.5" ry="10.5" fill-opacity="0.46"/><ellipse cx="1207" cy="601" rx="7" ry="7" fill-opacity="0.3"/><ellipse cx="1195" cy="611" rx="10.5" ry="8" fill-opacity="0.48"/><ellipse cx="1213.5" cy="622" rx="7.5" ry="5.5" fill-opacity="0.46"/><ellipse cx="1228" cy="620" rx="4.5" ry="3" fill-opacity="0.36"/><ellipse cx="1252.2" cy="594.5" rx="9" ry="9" fill-opacity="0.56"/><ellipse cx="1246.7" cy="628" rx="5" ry="8.5" fill-opacity="0.52"/><ellipse cx="1270" cy="636" rx="6.5" ry="3.8" fill-opacity="0.44"/><ellipse cx="1258" cy="632" rx="6" ry="4" fill-opacity="0.16"/><ellipse cx="1190.5" cy="651" rx="8" ry="16" fill-opacity="0.46"/><ellipse cx="1195" cy="668" rx="9" ry="8" fill-opacity="0.4"/><ellipse cx="1230.5" cy="656" rx="8" ry="5.5" fill-opacity="0.4"/><ellipse cx="1216" cy="665.5" rx="8" ry="5" fill-opacity="0.36"/><ellipse cx="1215" cy="640.5" rx="3.2" ry="5" fill-opacity="0.3"/><ellipse cx="1243" cy="646" rx="4" ry="7" fill-opacity="0.12"/><ellipse cx="1224" cy="607" rx="6" ry="5" fill-opacity="0.16"/><ellipse cx="1205" cy="606" rx="19" ry="21" fill-opacity="0.3" transform="rotate(-25 1205 606)"/><ellipse cx="1193" cy="655" rx="12" ry="24" fill-opacity="0.28"/><ellipse cx="1222" cy="661" rx="18" ry="10" fill-opacity="0.24"/><ellipse cx="1252" cy="596" rx="12.5" ry="12.5" fill-opacity="0.2"/><ellipse cx="1248" cy="630" rx="8" ry="12" fill-opacity="0.18"/><ellipse cx="1268" cy="636" rx="10" ry="6" fill-opacity="0.14"/><ellipse cx="1217" cy="589" rx="10" ry="14" fill-opacity="0.16"/></g>
<g filter="url(#bm)"><ellipse cx="997.5" cy="480" rx="12.8" ry="13.5" fill-opacity="0.6"/><path d="M1003 468 C1012 470 1022 478.5 1032 481 C1040 482.5 1044 475.2 1052 475 C1060 475 1062 479.5 1069 479.8 C1075 480 1078 477.6 1085 477.8 C1092 478 1095 480 1099 481.2 C1103 482.5 1104 486 1099 488.3 C1094 490 1090 490.4 1085 490.6 C1075 491.3 1065 492 1052 492.2 C1040 492.3 1025 492.6 1012 492.2 C1006 492 1000 491 996 489 Z" fill-opacity=".5"/><ellipse cx="1109" cy="484.6" rx="5.5" ry="3.8" fill-opacity="0.3"/><ellipse cx="994.2" cy="572.2" rx="5.6" ry="5.4" fill-opacity="0.62"/><ellipse cx="993.6" cy="615.5" rx="3.8" ry="6.2" fill-opacity="0.14"/><ellipse cx="1162" cy="573.7" rx="15.5" ry="7.2" fill-opacity="0.62"/><ellipse cx="1259.5" cy="483.6" rx="2.8" ry="2.8" fill-opacity="0.16"/></g>
<g filter="url(#brv)"><path d="M988 473 C996 465 1008 469 1011 478 C1018 481 1030 482 1036 486.5 C1030 491 1016 492 1006 492 C995 492 986 487 986 480 C986 477 987 475 988 473 Z" fill-opacity=".86"/><ellipse cx="1052.5" cy="482.6" rx="8.5" ry="7" fill-opacity="0.6"/></g>
<g filter="url(#br)"><ellipse cx="996.5" cy="479.5" rx="6.5" ry="8" fill-opacity="0.6"/><ellipse cx="994.2" cy="572.2" rx="2.8" ry="2.6" fill-opacity="0.5"/><ellipse cx="1162.3" cy="573.7" rx="8.2" ry="4" fill-opacity="0.9"/></g>
</g>
<g><text x="1205" y="601.2" font-size="6.8" font-weight="700" fill="#8fc868" fill-opacity="0.55" textLength="28" lengthAdjust="spacingAndGlyphs">SURREY</text><text x="1132.3" y="577.6" font-size="6.8" font-weight="700" fill="#2f9aa8" fill-opacity="0.45" textLength="13.2" lengthAdjust="spacingAndGlyphs">NEW</text><text x="1180" y="577.6" font-size="6.8" font-weight="700" fill="#2f9aa8" fill-opacity="0.45" textLength="24.2" lengthAdjust="spacingAndGlyphs">INSTER</text><text x="1236" y="484.2" font-size="6.6" font-weight="700" fill="#3a4f9a" fill-opacity="0.45" textLength="42" lengthAdjust="spacingAndGlyphs">COQUITLAM</text><text x="971.8" y="628.2" font-size="6.8" font-weight="700" fill="#3f54a0" fill-opacity="0.4" textLength="40" lengthAdjust="spacingAndGlyphs">RICHMOND</text></g>
</svg><!--MAPEND-->
<!--CODESTART--><style>
#code{left:1179.6px;top:140.5px;width:217.2px;height:277.4px;border:1.2px solid #c3cee0;border-radius:9px;overflow:hidden;background:#fff}
#code .tab{position:absolute;top:0;height:20.4px;font-size:8.9px;line-height:21.4px;text-align:center;color:#6a6f7d;background:#e9ebf3;white-space:nowrap}
#codebody{position:absolute;left:0;top:20.9px;width:215px;height:255.4px;background:#272822;overflow:hidden}
#codein{position:absolute;left:1.1px;top:-0.9px;width:600px;transform:scale(.5);transform-origin:0 0;font-family:"Liberation Mono",monospace;font-size:11.12px;line-height:13.155px;color:#f8f8f2;font-weight:700;white-space:pre}
.cl{height:13.155px}
.ln{display:inline-block;width:16.5px;text-align:right;color:#8f908a;font-weight:400}
.fd{display:inline-block;width:16.4px;text-align:center;color:#8f908a;font-weight:400;padding-left:2px}
</style>
<div id="code" class="abs">
<div class="tab" style="left:0;width:56.3px">index.html</div>
<div class="tab" style="left:56.3px;width:51.8px;background:#1d2560;color:#fff">embed.js</div>
<div class="tab" style="left:108.1px;width:54.6px">styles.css</div>
<div class="abs" style="left:162.7px;top:0;width:1px;height:20.4px;background:#cfd6e4"></div>
<svg class="abs" style="left:166px;top:0" width="50" height="21" viewBox="0 0 50 21">
<rect x="8.6" y="4.2" width="8" height="9.8" rx="1.2" fill="#8c9dbb"/>
<rect x="5.6" y="6.6" width="8.6" height="10.4" rx="1.3" fill="#8c9dbb" stroke="#fff" stroke-width="1"/>
<path d="M34.2 5 L43.8 10.2 L34.2 15.4 Z" fill="#8c9dbb"/>
</svg>
<div id="codebody"><div class="abs" style="left:0;top:0;width:16px;height:260px;background:#2f3129"></div><div id="codein"><div class="cl"><span class="ln">1</span><span class="fd">-</span><span style="color:#66d9ef;font-style:italic">const</span> getToken <span style="color:#f92672">=</span> <span style="color:#f92672">async</span> () <span style="color:#66d9ef">=&gt;</span> {</div><div class="cl"><span class="ln">2</span><span class="fd">-</span>    <span style="color:#66d9ef;font-style:italic">const</span> response <span style="color:#f92672">=</span> <span style="color:#f92672">await</span> fetch(<span style="color:#e6db74">'/api/token'</span>, {</div><div class="cl"><span class="ln">3</span><span class="fd"> </span>        method: <span style="color:#e6db74">'GET'</span>,</div><div class="cl"><span class="ln">4</span><span class="fd"> </span>        credentials: <span style="color:#e6db74">'same-origin'</span></div><div class="cl"><span class="ln">5</span><span class="fd"> </span>    });</div><div class="cl"><span class="ln">6</span><span class="fd">-</span>    <span style="color:#f92672">return</span> response.json().then((result) <span style="color:#66d9ef">=&gt;</span> {</div><div class="cl"><span class="ln">7</span><span class="fd">-</span>        <span style="color:#f92672">return</span> {</div><div class="cl"><span class="ln">8</span><span class="fd"> </span>            access_token: result.dataDiscoveryToken,</div><div class="cl"><span class="ln">9</span><span class="fd"> </span>            expires_in: result.expiresIn,</div><div class="cl"><span class="ln">10</span><span class="fd"> </span>        };</div><div class="cl"><span class="ln">11</span><span class="fd"> </span>    });</div><div class="cl"><span class="ln">12</span><span class="fd"> </span>};</div><div class="cl"><span class="ln">13</span><span class="fd"> </span></div><div class="cl"><span class="ln">14</span><span class="fd"> </span></div><div class="cl"><span class="ln">15</span><span class="fd"> </span></div><div class="cl"><span class="ln">16</span><span class="fd"> </span><span style="color:#66d9ef;font-style:italic">const</span> embedManagerPromise <span style="color:#f92672">=</span> <span style="color:#a6e22e">window</span>.initComposerEmbedManager();</div><div class="cl"><span class="ln">17</span><span class="fd"> </span></div><div class="cl"><span class="ln">18</span><span class="fd">-</span><span style="color:#66d9ef;font-style:italic">const</span> componentConfig <span style="color:#f92672">=</span> {</div><div class="cl"><span class="ln">19</span><span class="fd"> </span>    <span style="color:#e6db74">"originId"</span>: <span style="color:#e6db74">""</span>,</div><div class="cl"><span class="ln">20</span><span class="fd"> </span>    <span style="color:#e6db74">"dashboardId"</span>: <span style="color:#e6db74">"658e97f7af70ab3f797a9a28"</span>,</div><div class="cl"><span class="ln">21</span><span class="fd"> </span>    <span style="color:#e6db74">"interactivityProfileName"</span>:<span style="color:#e6db74">"interactive"</span>,</div><div class="cl"><span class="ln">22</span><span class="fd"> </span>    <span style="color:#e6db74">"theme"</span>:<span style="color:#e6db74">"composer"</span>,</div><div class="cl"><span class="ln">23</span><span class="fd"> </span>    <span style="color:#e6db74">"editor"</span>: { <span style="color:#e6db74">"placement"</span>: <span style="color:#e6db74">"modals"</span> },</div><div class="cl"><span class="ln">24</span><span class="fd">-</span>    <span style="color:#e6db74">"header"</span>: {</div><div class="cl"><span class="ln">25</span><span class="fd"> </span>        <span style="color:#e6db74">"showActions"</span>: <span style="color:#ae81ff">false</span>,</div><div class="cl"><span class="ln">26</span><span class="fd"> </span>        <span style="color:#e6db74">"showTitle"</span>: <span style="color:#ae81ff">false</span>,</div><div class="cl"><span class="ln">27</span><span class="fd"> </span>        <span style="color:#e6db74">"visible"</span>: <span style="color:#ae81ff">false</span></div><div class="cl"><span class="ln">28</span><span class="fd"> </span>    }</div><div class="cl"><span class="ln">29</span><span class="fd"> </span>}</div><div class="cl"><span class="ln">30</span><span class="fd"> </span></div><div class="cl"><span class="ln">31</span><span class="fd">-</span><span style="color:#66d9ef;font-style:italic">const</span> createEmbedComponent <span style="color:#f92672">=</span> (embedManager, config, containerId) <span style="color:#66d9ef">=&gt;</span> {</div><div class="cl"><span class="ln">32</span><span class="fd">-</span>    <span style="color:#f92672">return</span> embedManager.createComponent(<span style="color:#e6db74">"dashboard"</span>, config, (component) <span style="color:#66d9ef">=&gt;</span> {</div><div class="cl"><span class="ln">33</span><span class="fd"> </span>        component.render(<span style="color:#a6e22e">document</span>.<span style="color:#66d9ef">getElementById</span>(containerId));</div><div class="cl"><span class="ln">34</span><span class="fd"> </span>    })</div><div class="cl"><span class="ln">35</span><span class="fd"> </span>}</div><div class="cl"><span class="ln">36</span><span class="fd"> </span></div><div class="cl"><span class="ln">37</span><span class="fd">-</span>embedManagerPromise.then(embedManager <span style="color:#66d9ef">=&gt;</span> {</div><div class="cl"><span class="ln">38</span><span class="fd"> </span>    createEmbedComponent(embedManager, componentConfig, <span style="color:#e6db74">'widget-container'</span>);</div><div class="cl"><span class="ln">39</span><span class="fd"> </span>});</div><div class="cl"><span class="ln">40</span><span class="fd"> </span></div></div></div>
</div><!--CODEEND-->
<div class="abs" style="left:1px;top:221.4px;width:219.3px;height:378.6px;border:1.1px solid #b7c3d7;border-radius:8px;background:#f8f9fd;overflow:hidden;box-shadow:0 1px 4px rgba(120,140,170,.12)">
<div class="abs" style="left:0;top:0;width:218px;height:34px;background:linear-gradient(90deg,#9bdaf5 0%,#b9c6f7 45%,#d8b6fa 80%,#e8aafb 100%)"></div>
</div>
<svg class="abs" style="left:0;top:0" width="240" height="688" viewBox="0 0 240 688">
<defs>
<linearGradient id="hx1" x1="0" y1="0" x2="0" y2="1"><stop offset="0" stop-color="#00eaff"/><stop offset=".3" stop-color="#2f8df5"/><stop offset=".65" stop-color="#4a3ff0"/><stop offset="1" stop-color="#6a3af0"/></linearGradient>
<linearGradient id="hx2" x1="0" y1="0" x2="1" y2="0"><stop offset=".45" stop-color="#d24bff" stop-opacity="0"/><stop offset="1" stop-color="#d24bff" stop-opacity="1"/></linearGradient>
</defs>
<polygon points="196.90,226.20 207.81,232.50 207.81,245.10 196.90,251.40 185.99,245.10 185.99,232.50" fill="url(#hx1)"/>
<polygon points="196.90,226.20 207.81,232.50 207.81,245.10 196.90,251.40 185.99,245.10 185.99,232.50" fill="url(#hx2)"/>
<polygon points="196.90,230.70 203.91,234.75 203.91,242.85 196.90,246.90 189.89,242.85 189.89,234.75" fill="#2a2a2e"/>
<path d="M196.9 234.60000000000002 Q197.6 238.10000000000002 200.70000000000002 238.8 Q197.6 239.5 196.9 243.0 Q196.20000000000002 239.5 193.1 238.8 Q196.20000000000002 238.10000000000002 196.9 234.60000000000002 Z" fill="#fff"/>
</svg>
<div class="abs" style="left:46.5px;top:269px;width:161.5px;height:59.6px;background:#a9e6fd;border-radius:5px;box-shadow:0 2px 5px rgba(120,150,190,.18)">
<div class="t" style="left:6.4px;top:9.2px;font-size:11.4px;color:#3c4658">Which Sales Rep have</div>
<div class="t" style="left:6.4px;top:25.2px;font-size:11.4px;color:#3c4658">reached their Monthly</div>
<div class="t" style="left:6.4px;top:41.2px;font-size:11.4px;color:#3c4658">Target based on Deals won?</div>
</div>
<div class="abs" style="left:13px;top:341.7px;width:161.4px;height:124.5px;background:#fff;border-radius:5px;box-shadow:0 2px 6px rgba(120,140,180,.16)"><div class="t" style="left:5.9px;top:9.5px;font-size:11.15px;color:#3c4658">These are all the Sales Reps:</div><div class="t" style="left:5.9px;top:25.5px;font-size:11.15px;color:#3c4658">Kaiser $96k - $100k</div><div class="t" style="left:5.9px;top:41.5px;font-size:11.15px;color:#3c4658">Walden $106k - $100k</div><div class="t" style="left:5.9px;top:57.5px;font-size:11.15px;color:#3c4658">Nicole $247k- $100k</div><div class="t" style="left:5.9px;top:73.5px;font-size:11.15px;color:#3c4658">Abdel $65k - $100k</div><div class="t" style="left:5.9px;top:89.5px;font-size:11.15px;color:#3c4658">Gene $83k - $100k</div><div class="t" style="left:5.9px;top:105.5px;font-size:11.15px;color:#3c4658">Reese $82k - $100k</div></div>
<div class="abs" style="left:46.4px;top:478px;width:161.8px;height:60px;background:#a9e6fd;box-shadow:0 2px 5px rgba(120,150,190,.18)">
<div class="t" style="left:6.4px;top:9.6px;font-size:11.4px;color:#3c4658">Generate a visual that</div>
<div class="t" style="left:6.4px;top:25.6px;font-size:11.4px;color:#3c4658">shows Deals Won this</div>
<div class="t" style="left:6.4px;top:41.6px;font-size:11.4px;color:#3c4658">Quarter.</div>
</div>
<div class="abs" style="left:13.5px;top:551.2px;width:194.6px;height:36.8px;background:#fff;border-radius:5px;box-shadow:0 2px 7px rgba(120,140,180,.14)">
<div class="t" style="left:12.4px;top:13.6px;font-size:9.6px;color:#a3afc6">Type your question here..</div>
</div>
<svg class="abs" style="left:0;top:540px" width="240" height="60" viewBox="0 540 240 60">
<rect x="170.6" y="557" width="25" height="24.8" rx="4" fill="#5a38e0"/>
<path d="M178.6 564.9 L187.4 569.6 L178.6 574.4 Z M178.6 569.6 H182" fill="none" stroke="#fff" stroke-width="1.2" stroke-linejoin="round"/>
</svg>
</div>
</body>
</html>
